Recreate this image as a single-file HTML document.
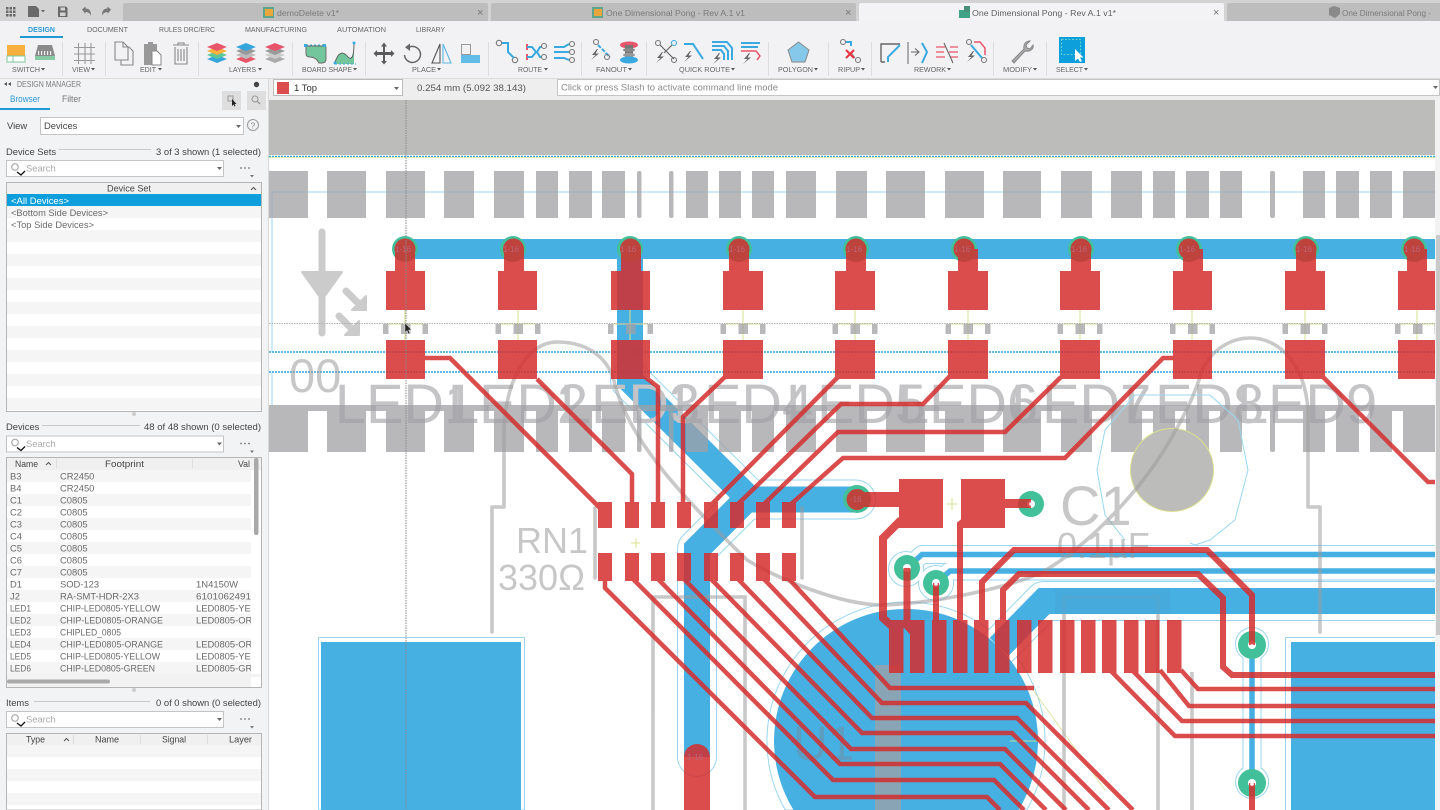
<!DOCTYPE html>
<html><head><meta charset="utf-8"><title>One Dimensional Pong</title>
<style>
html,body{margin:0;padding:0;width:1440px;height:810px;overflow:hidden;background:#fff}
svg{display:block;position:absolute;left:0;top:0;width:1440px;height:810px;overflow:hidden;filter:blur(.35px)}
text{font-family:"Liberation Sans",sans-serif}
.tb{font-size:7.6px;fill:#666}
.tab{font-size:8px;fill:#5f5f5f}
.t{font-size:9.4px;fill:#6a6a6a}
.h{font-size:9.4px;fill:#444}
.vt{font-size:8px;fill:#b9657a}
.si{fill:none;stroke:#777;stroke-width:1.1}
.bl{fill:none;stroke:#3aa9e0;stroke-width:2}
</style></head><body>
<svg width="1440" height="810" viewBox="0 0 1440 810" xmlns="http://www.w3.org/2000/svg">
<defs>
<path id="bolt" d="M6 0L1 6H4.500L0 11L8 4.500H4.500L7 0Z" fill="#666"/>
<g id="mid"><rect x="-22.500" y="324" width="5.500" height="10"/><rect x="-4.500" y="324" width="9.500" height="10"/><rect x="17" y="324" width="5.500" height="10"/></g>
<g id="row">
<rect x="269" width="39" height="47"/><rect x="327" width="39" height="47"/><rect x="386" width="39" height="47"/><rect x="444" width="30" height="47"/><rect x="494" width="30" height="47"/><rect x="536" width="22" height="47"/><rect x="569" width="23" height="47"/><rect x="602" width="23" height="47"/><rect x="637" width="4.500" height="47" rx="2"/><rect x="669" width="4.500" height="47" rx="2"/><rect x="686" width="22" height="47"/><rect x="719" width="22" height="47"/><rect x="752" width="22" height="47"/><rect x="786" width="30" height="47"/><rect x="836" width="31" height="47"/><rect x="886" width="39" height="47"/><rect x="945" width="39" height="47"/><rect x="1003" width="38" height="47"/><rect x="1061" width="31" height="47"/><rect x="1111" width="31" height="47"/><rect x="1153" width="22" height="47"/><rect x="1186" width="23" height="47"/><rect x="1220" width="22" height="47"/><rect x="1270" width="5" height="47" rx="2"/><rect x="1303" width="22" height="47"/><rect x="1336" width="23" height="47"/><rect x="1370" width="22" height="47"/><rect x="1403" width="32" height="47"/>
</g>
<g id="srch"><rect x="6.500" y=".5" width="217" height="16" fill="#fff" stroke="#c4c4c4"/><circle cx="15" cy="7" r="3.300" fill="none" stroke="#aaa" stroke-width="1.200"/><path d="M17 12L21 15L25 11" fill="none" stroke="#111" stroke-width="1.300"/><path d="M217 7h5l-2.500 3z" fill="#666"/><circle cx="241" cy="8" r=".9" fill="#777"/><circle cx="245" cy="8" r=".9" fill="#777"/><circle cx="249" cy="8" r=".9" fill="#777"/><path d="M250 15h4l-2 2.500z" fill="#777"/></g>
</defs>

<!-- title bar -->
<rect width="1440" height="22" fill="#d3d3d3"/>
<g fill="#6a6a6a"><rect x="6" y="7" width="2.500" height="2.500"/><rect x="9.500" y="7" width="2.500" height="2.500"/><rect x="13" y="7" width="2.500" height="2.500"/><rect x="6" y="10.500" width="2.500" height="2.500"/><rect x="9.500" y="10.500" width="2.500" height="2.500"/><rect x="13" y="10.500" width="2.500" height="2.500"/><rect x="6" y="14" width="2.500" height="2.500"/><rect x="9.500" y="14" width="2.500" height="2.500"/><rect x="13" y="14" width="2.500" height="2.500"/>
<path d="M28 6h8l3 3v8H28z"/><path d="M41 10h4l-2 2.500z"/>
<path d="M58 6.500h8l1.500 1.500v9h-9.500zM60.500 7.500v3h4.500v-3zM60 12.500v3.500h5.500v-3.500z" fill-rule="evenodd"/></g>
<path d="M82 9.500l3.500-3v2c4 0 5.500 2.500 5.500 7-1.500-2.500-3-3.500-5.500-3.500v2z" fill="#777"/>
<path d="M111 9.500l-3.500-3v2c-4 0-5.500 2.500-5.500 7 1.500-2.500 3-3.500 5.500-3.500v2z" fill="#777"/>
<path d="M123 21V5q0-2 2-2H486q2 0 2 2V21z" fill="#bdbdbd"/>
<path d="M491 21V5q0-2 2-2H854q2 0 2 2V21z" fill="#bdbdbd"/>
<path d="M859 22V5q0-2 2-2H1222q2 0 2 2V22z" fill="#f3f3f5"/>
<path d="M1227 21V5q0-2 2-2H1440V21z" fill="#bdbdbd"/>
<rect x="263" y="7" width="11" height="11" fill="#5fa58b"/><rect x="265" y="9" width="8" height="7" fill="#e8a63c"/>
<text x="277" y="16" class="tab" textLength="62" lengthAdjust="spacingAndGlyphs" style="fill:#7a7a7a">demoDelete v1*</text>
<text x="477" y="16" font-size="11" fill="#777">×</text>
<rect x="592" y="7" width="11" height="11" fill="#5fa58b"/><rect x="594" y="9" width="8" height="7" fill="#e8a63c"/>
<text x="606" y="16" class="tab" textLength="139" lengthAdjust="spacingAndGlyphs" style="fill:#7a7a7a">One Dimensional Pong - Rev A.1 v1</text>
<text x="845" y="16" font-size="11" fill="#777">×</text>
<rect x="959" y="10" width="11" height="8" fill="#3fa487"/><rect x="964" y="6" width="6" height="6" fill="#4a8f78"/>
<text x="972" y="16" class="tab" textLength="144" lengthAdjust="spacingAndGlyphs">One Dimensional Pong - Rev A.1 v1*</text>
<text x="1213" y="16" font-size="11" fill="#777">×</text>
<path d="M1329 8l5-2 6 2v6l-5 4-6-3z" fill="#8a8a8a"/>
<text x="1342" y="16" class="tab" textLength="89" lengthAdjust="spacingAndGlyphs" style="fill:#7a7a7a">One Dimensional Pong -</text>

<!-- toolbar -->
<rect y="21" width="1440" height="57" fill="#f2f2f4"/>
<text x="28" y="32" class="tb" textLength="27" lengthAdjust="spacingAndGlyphs" style="fill:#2a9ad6;font-weight:bold">DESIGN</text>
<text x="87" y="32" class="tb" textLength="41" lengthAdjust="spacingAndGlyphs">DOCUMENT</text>
<text x="159" y="32" class="tb" textLength="56" lengthAdjust="spacingAndGlyphs">RULES DRC/ERC</text>
<text x="245" y="32" class="tb" textLength="62" lengthAdjust="spacingAndGlyphs">MANUFACTURING</text>
<text x="337" y="32" class="tb" textLength="49" lengthAdjust="spacingAndGlyphs">AUTOMATION</text>
<text x="416" y="32" class="tb" textLength="29" lengthAdjust="spacingAndGlyphs">LIBRARY</text>
<rect x="20" y="36" width="43" height="2" fill="#1f9ad6"/>
<g fill="#ddd"><rect x="62" y="42" width="1" height="34"/><rect x="105" y="42" width="1" height="34"/><rect x="198" y="42" width="1" height="34"/><rect x="292" y="42" width="1" height="34"/><rect x="365" y="42" width="1" height="34"/><rect x="488" y="42" width="1" height="34"/><rect x="581" y="42" width="1" height="34"/><rect x="646" y="42" width="1" height="34"/><rect x="768" y="42" width="1" height="34"/><rect x="828" y="42" width="1" height="34"/><rect x="871" y="42" width="1" height="34"/><rect x="993" y="42" width="1" height="34"/><rect x="1046" y="42" width="1" height="34"/></g>
<g>
<text x="12" y="72" class="tb" textLength="28" lengthAdjust="spacingAndGlyphs">SWITCH</text><path d="M41 68h4l-2 2.500z" fill="#555"/>
<text x="72" y="72" class="tb" textLength="18" lengthAdjust="spacingAndGlyphs">VIEW</text><path d="M91 68h4l-2 2.500z" fill="#555"/>
<text x="140" y="72" class="tb" textLength="16" lengthAdjust="spacingAndGlyphs">EDIT</text><path d="M158 68h4l-2 2.500z" fill="#555"/>
<text x="229" y="72" class="tb" textLength="27" lengthAdjust="spacingAndGlyphs">LAYERS</text><path d="M258 68h4l-2 2.500z" fill="#555"/>
<text x="302" y="72" class="tb" textLength="50" lengthAdjust="spacingAndGlyphs">BOARD SHAPE</text><path d="M353 68h4l-2 2.500z" fill="#555"/>
<text x="412" y="72" class="tb" textLength="24" lengthAdjust="spacingAndGlyphs">PLACE</text><path d="M437 68h4l-2 2.500z" fill="#555"/>
<text x="518" y="72" class="tb" textLength="24" lengthAdjust="spacingAndGlyphs">ROUTE</text><path d="M544 68h4l-2 2.500z" fill="#555"/>
<text x="596" y="72" class="tb" textLength="31" lengthAdjust="spacingAndGlyphs">FANOUT</text><path d="M628 68h4l-2 2.500z" fill="#555"/>
<text x="679" y="72" class="tb" textLength="51" lengthAdjust="spacingAndGlyphs">QUICK ROUTE</text><path d="M731 68h4l-2 2.500z" fill="#555"/>
<text x="778" y="72" class="tb" textLength="35" lengthAdjust="spacingAndGlyphs">POLYGON</text><path d="M814 68h4l-2 2.500z" fill="#555"/>
<text x="838" y="72" class="tb" textLength="22" lengthAdjust="spacingAndGlyphs">RIPUP</text><path d="M861 68h4l-2 2.500z" fill="#555"/>
<text x="914" y="72" class="tb" textLength="32" lengthAdjust="spacingAndGlyphs">REWORK</text><path d="M947 68h4l-2 2.500z" fill="#555"/>
<text x="1003" y="72" class="tb" textLength="29" lengthAdjust="spacingAndGlyphs">MODIFY</text><path d="M1033 68h4l-2 2.500z" fill="#555"/>
<text x="1056" y="72" class="tb" textLength="27" lengthAdjust="spacingAndGlyphs">SELECT</text><path d="M1084 68h4l-2 2.500z" fill="#555"/>
</g>
<!-- icons -->
<path d="M7 45h18v12H7z" fill="#f6ae3c"/><rect x="13" y="56" width="12" height="6" fill="#fff" stroke="#7cc8a0" stroke-width="1"/><rect x="7" y="56" width="6" height="6" fill="#fff" stroke="#7cc8a0" stroke-width="1"/>
<path d="M38 45h14l3 11H35z" fill="#8a8a8a"/><g fill="#eee"><rect x="38" y="51" width="1.200" height="4"/><rect x="41" y="51" width="1.200" height="4"/><rect x="44" y="51" width="1.200" height="4"/><rect x="47" y="51" width="1.200" height="4"/><rect x="50" y="51" width="1.200" height="4"/></g><rect x="35" y="56" width="20" height="4" fill="#86cba4"/>
<g stroke="#999" stroke-width="1.100"><path d="M74 47.500H95M74 54H95M74 60.500H95M78.500 43V64M85 43V64M91 43V64"/></g>
<path class="si" d="M115 42h8l5 5v13h-13zM123 42v5h5M128 47h1l4 4v14h-12v-5" style="stroke:#888"/>
<path d="M144 44h4v-2h5v2h4v9h-4v12h-9z" fill="#999"/><path d="M152 51h5l4 4v10h-9z" fill="#fff" stroke="#888"/>
<path class="si" d="M175 47V64h12V47M173 45h16M178 45v-2h6v2M178 49v12M181 49v12M184 49v12" style="stroke:#888"/>
<g>
<polygon points="217,55 227,59 217,63 207,59" fill="#35a5dd"/><polygon points="217,51 227,55 217,59 207,55" fill="#5cc59a"/><polygon points="217,47 227,51 217,55 207,51" fill="#f8b13b"/><polygon points="217,43 227,47 217,51 207,47" fill="#e8556a"/>
<polygon points="246,55 256,59 246,63 236,59" fill="#e8556a"/><polygon points="246,51 256,55 246,59 236,55" fill="#bbb"/><polygon points="246,47 256,51 246,55 236,51" fill="#999"/><polygon points="246,43 256,47 246,51 236,47" fill="#35a5dd"/>
<polygon points="275,55 285,59 275,63 265,59" fill="#aaa"/><polygon points="275,51 285,55 275,59 265,55" fill="#ccc"/><polygon points="275,47 285,51 275,55 265,51" fill="#999"/><polygon points="275,43 285,47 275,51 265,47" fill="#e8556a"/>
</g>
<path d="M306 46h19q1 0 1 2v11q0 4-4 4h-3q-3-6-9-6-4 0-4-3z" fill="#73c69b" stroke="#666" stroke-width=".9"/><path d="M306 45h19" stroke="#3aa9e0" stroke-dasharray="2 2"/><rect x="304" y="44" width="3" height="3" fill="#3aa9e0"/><rect x="323" y="44" width="3" height="3" fill="#3aa9e0"/>
<path d="M335 64V62Q340 48 347 56T354 43V64z" fill="#73c69b"/><path d="M335 62Q340 48 347 56T354 43" fill="none" stroke="#555" stroke-width=".9"/><path d="M335 64H356" stroke="#3aa9e0" stroke-dasharray="2 2"/><circle cx="354" cy="43" r="1.500" fill="#3aa9e0"/><circle cx="335" cy="63" r="1.500" fill="#3aa9e0"/>
<path d="M384 42.500l3 4h-2v5.500H391V50l3.500 3.500-3.500 3.500v-2h-6v6h2l-3 3.500-3-3.500h2v-6h-6v2l-3.500-3.500 3.500-3.500v2h6v-5.500h-2z" fill="#5a5a5a"/>
<path d="M409.500 47a8 8 0 1 1-5 8" fill="none" stroke="#666" stroke-width="1.500"/><path d="M410 43.500v7.500l-5-3.700z" fill="#666"/>
<path d="M440 44L432 63H440z" fill="none" stroke="#555" stroke-width="1.100"/><path d="M443 44L451 63H443z" fill="none" stroke="#5db7e4" stroke-width="1.100"/>
<rect x="461.500" y="44.500" width="9" height="10" fill="none" stroke="#999"/><rect x="461" y="55" width="19" height="8" fill="#62bce8"/>
<g class="si"><circle cx="499" cy="43" r="2.700"/><circle cx="515" cy="60" r="2.700"/></g><path class="bl" d="M502 43h6v9l6 6"/>
<path d="M527 44v6M527 54v6" stroke="#e8556a" stroke-width="2"/><path class="bl" d="M527 47h5l4 5-4 5h-5M537 52l3-5h2M537 52l3 5h2"/><g class="si"><circle cx="544" cy="46" r="2.500"/><circle cx="544" cy="57" r="2.500"/></g>
<path class="bl" d="M554 47h10l5-3M554 52H569M554 58h10l5 2"/><g class="si"><circle cx="572" cy="44" r="2.500"/><circle cx="572" cy="52" r="2.500"/><circle cx="572" cy="60" r="2.500"/></g>
<circle class="si" cx="596" cy="42" r="2.500"/><path class="bl" d="M598 45l12 12" stroke-dasharray="4 1.500"/><circle class="si" cx="607" cy="57" r="2.500"/><use href="#bolt" x="591" y="49"/>
<ellipse cx="629" cy="45" rx="9" ry="3.500" fill="#e8556a"/><rect x="625" y="45" width="8" height="14" fill="#777"/><ellipse cx="629" cy="50" rx="6" ry="2" fill="#888"/><ellipse cx="629" cy="55" rx="6" ry="2" fill="#999"/><ellipse cx="629" cy="60" rx="9" ry="3.500" fill="#3aa9e0"/>
<g class="si"><circle cx="658" cy="43" r="2.500"/><circle cx="674" cy="60" r="2.500"/></g><circle class="si" cx="674" cy="43" r="2.500" style="stroke:#3aa9e0"/><path d="M660 45l14 14M672 45l-8 8" fill="none" stroke="#666" stroke-width="1.200"/><use href="#bolt" x="656" y="52"/>
<path class="bl" d="M684 44h9l10 15"/><use href="#bolt" x="684" y="51"/>
<path class="bl" d="M712 42h15l5 6v12M712 46h12l4 5v9M712 50h9l3 4v6"/><use href="#bolt" x="713" y="53"/>
<path class="bl" d="M741 43h19M741 47h17"/><path d="M741 51h15l4 5-3 4" fill="none" stroke="#e8556a" stroke-width="1.500"/><use href="#bolt" x="743" y="53"/>
<polygon points="798.500,42 809,50 805,62 792,62 788,50" fill="#85c8ea" stroke="#888" stroke-width="1"/>
<circle class="si" cx="843" cy="42" r="2.500"/><circle class="si" cx="858" cy="60" r="2.500"/><path class="bl" d="M846 42h5v4"/><path d="M851 52l4 6" stroke="#888"/><path d="M846 50l8 8M854 50l-8 8" stroke="#e8323c" stroke-width="2"/>
<path d="M881 62V44H900M881 62h4" fill="none" stroke="#666" stroke-width="1.400"/><path class="bl" d="M888 62V57L900 45"/>
<path d="M908 42V64" stroke="#666"/><path d="M911 52h7M915 48.500l4 3.500-4 3.500" fill="none" stroke="#666" stroke-width="1.100"/><path class="bl" d="M922 43l5 9-5 11"/>
<path d="M936 47h9M936 52h8M936 57h9M950 47h8M949 52h9M950 57h8" stroke="#e8556a" stroke-width="1.200"/><path d="M944 43l9 20" stroke="#666" stroke-width="1.100"/>
<circle class="si" cx="969" cy="42" r="2.500"/><circle class="si" cx="984" cy="60" r="2.500"/><path class="bl" d="M971 45l11 13"/><path d="M974 42h6l5 6v7" fill="none" stroke="#e8556a" stroke-width="1.500"/><use href="#bolt" x="967" y="51"/>
<path d="M1012 61l12-12c-1-5 2-8 6-8l-4 4 1 3 3 1 3-4c1 4-3 7-8 6l-11 12z" fill="#aaa" stroke="#888"/>
<rect x="1059" y="37" width="26" height="26" fill="#0d9fdb"/><rect x="1061.500" y="39.500" width="19" height="15" fill="none" stroke="#7fe0d0" stroke-width=".8" stroke-dasharray="2 1.500"/><path d="M1075 49v12l3-2.500 2 3.500 2-1-2-3.500h3.500z" fill="#fff"/>

<!-- command row -->
<rect x="269" y="78" width="1171" height="22" fill="#eeeeee"/>
<rect x="269" y="78" width="1171" height="1" fill="#dcdcd8"/>
<rect x="273.500" y="79.500" width="129" height="16" fill="#fff" stroke="#bbb"/>
<rect x="277" y="82" width="12" height="12" fill="#db4c4c"/>
<text x="294" y="91" font-size="9.500" fill="#333">1 Top</text>
<path d="M394 87h5l-2.500 3z" fill="#666"/>
<text x="417" y="91" font-size="9.500" fill="#555" textLength="109" lengthAdjust="spacingAndGlyphs">0.254 mm (5.092 38.143)</text>
<rect x="557.500" y="79.500" width="882" height="16" fill="#fff" stroke="#c4c4c4"/>
<text x="561" y="90.500" font-size="9.500" fill="#8a8a8a" textLength="217" lengthAdjust="spacingAndGlyphs">Click or press Slash to activate command line mode</text>
<path d="M1433 86h5l-2.500 3z" fill="#666"/>

<!-- PCB canvas -->
<rect x="269" y="100" width="1171" height="710" fill="#fff"/>
<rect x="269" y="100" width="1166" height="55" fill="#bcbcba"/>

<!-- copper bottom (blue) -->
<g fill="none" stroke="#9ad6f1" stroke-linejoin="round" stroke-linecap="round">
<path d="M318.500 810V637.500H524.500V810Z" fill="#fff" stroke-width="1"/>
<path d="M1285.500 810V637.500H1439" fill="#fff" stroke-width="1"/>
<path d="M785.300 810A139 139 0 1 1 1026.700 810Z" fill="#fff" stroke-width="1"/>
<path d="M272 192V352M272 372V405M272 192H1435" stroke-width="1"/>
<path d="M630 380L750 499.500H856" stroke-width="40"/><path d="M697 757V549L748 498" stroke-width="40"/>
<path d="M1435 601H1044L999 647" stroke-width="40"/>
<path d="M1435 554.500H922L906 569" stroke-width="19"/><path d="M1435 571H950L936 583" stroke-width="19"/>
<path d="M1252 644V782" stroke-width="19"/><path d="M1252 644h.1M1252 782h.1" stroke-width="34"/>
<path d="M906 569h.1M936 583h.1" stroke-width="36"/>
</g>
<g fill="none" stroke="#fff" stroke-linejoin="round" stroke-linecap="round">
<path d="M630 380L750 499.500H856" stroke-width="38"/><path d="M697 757V549L748 498" stroke-width="38"/>
<path d="M1435 601H1044L999 647" stroke-width="38"/>
<path d="M1435 554.500H922L906 569" stroke-width="17"/><path d="M1435 571H950L936 583" stroke-width="17"/>
<path d="M1252 644V782" stroke-width="17"/><path d="M1252 644h.1M1252 782h.1" stroke-width="32"/>
<path d="M906 569h.1M936 583h.1" stroke-width="34"/>
</g>
<g fill="#46b0e3">
<rect x="321" y="642" width="200" height="168"/>
<rect x="1291" y="642" width="144" height="168"/>
<path d="M793.500 810A132 132 0 1 1 1018.500 810Z"/>
<rect x="405" y="239" width="1030" height="20"/>
</g>
<g fill="none" stroke="#46b0e3" stroke-linejoin="miter">
<path d="M630 249V380L750 499.500H856" stroke-width="26"/>
<path d="M697 757V549L748 498" stroke-width="26"/>
<path d="M1435 601H1044L999 647" stroke-width="26"/>
<path d="M1435 554.500H922L906 569" stroke-width="5.500"/>
<path d="M1435 571H950L936 583" stroke-width="5.500"/>
<path d="M1252 644V782" stroke-width="5.500"/>
</g>
<g fill="#42c09a">
<circle cx="405" cy="249" r="13"/><circle cx="513" cy="249" r="13"/><circle cx="630" cy="249" r="13"/><circle cx="739" cy="249" r="13"/><circle cx="856" cy="249" r="13"/><circle cx="964" cy="249" r="13"/><circle cx="1081" cy="249" r="13"/><circle cx="1189" cy="249" r="13"/><circle cx="1306" cy="249" r="13"/><circle cx="1414" cy="249" r="13"/>
<circle cx="857" cy="499" r="14"/><circle cx="1031" cy="504" r="13"/><circle cx="907" cy="568" r="13"/><circle cx="936" cy="583" r="13"/><circle cx="1252" cy="645" r="14"/><circle cx="1252" cy="783" r="14"/>
</g>
<g fill="#fff"><circle cx="1031" cy="504" r="4"/><circle cx="936" cy="583" r="4"/><circle cx="1252" cy="645" r="4"/><circle cx="1252" cy="783" r="4"/><circle cx="907" cy="568" r="4"/></g>

<!-- dashed dimension lines -->
<g stroke="#2fa4e0" stroke-width="1.500" stroke-dasharray="2 1"><path d="M269 156.500H1435M269 352H1435M269 372H1435"/></g>
<path d="M269 157.500H1435" stroke="#dfe48f" stroke-width=".7"/>

<!-- yellow marks -->
<g stroke="#d9e08c" stroke-width="1" fill="none">
<path d="M405 310V340M388 324H423M518 310V340M500 324H535M630 310V340M613 324H648M743 310V340M725 324H760M855 310V340M838 324H872M968 310V340M950 324H985M1080 310V340M1063 324H1098M1192 310V340M1175 324H1210M1305 310V340M1288 324H1322M1417 310V340M1400 324H1435"/>
<path d="M952 498V510M947 504H957M631 543H640M636 538V548"/>
<path d="M1033 690L1105 790" stroke-width=".7"/><path d="M1010 741H1040" stroke="#b7dd9f"/>
</g>

<!-- LED reference text (below pads) -->
<g fill="#c4c4c6" font-size="56">
<text x="335" y="423">LED1</text>
<text x="448" y="423">LED2</text>
<text x="560" y="423">LED3</text>
<text x="673" y="423">LED4</text>
<text x="786" y="423">LED5</text>
<text x="898" y="423">LED6</text>
<text x="1011" y="423">LED7</text>
<text x="1124" y="423">LED8</text>
<text x="1237" y="423">LED9</text>
</g>

<!-- gray pad layer -->
<g fill="#a0a0a4" opacity=".75">
<use href="#row" y="171"/>
<use href="#row" y="405"/>
<rect x="269" y="405" width="1166" height="6"/>
<use href="#mid" x="405.500"/><use href="#mid" x="518"/><use href="#mid" x="630.500"/><use href="#mid" x="743"/><use href="#mid" x="855"/><use href="#mid" x="968"/><use href="#mid" x="1080"/><use href="#mid" x="1192.500"/><use href="#mid" x="1305"/><use href="#mid" x="1417.500"/>
<rect x="875" y="665" width="26" height="145"/>
</g>
<circle cx="1172" cy="470" r="41.500" fill="#bcbcbb" stroke="#dbe08d" stroke-width="1"/>
<path d="M1135 395L1210 395L1238 420L1248 470L1235 520L1210 540L1195 545L1190 543M1135 395L1105 430L1097 470L1105 515L1125 540" fill="none" stroke="#9ad6f1" stroke-width="1"/>

<!-- silk layer -->
<g opacity=".55">
<g fill="none" stroke="#9c9c9c" stroke-width="3.600" stroke-linejoin="round" stroke-linecap="round">
<path d="M492 632V507H504V430C505 385 525 342 557 342C590 342 610 360 615 385C630 440 680 495 747 560C780 580 840 604 880 605C930 604 1000 590 1041 573C1090 545 1140 490 1166 447C1185 415 1195 395 1202 370C1215 345 1235 338 1250 338C1280 338 1305 365 1308 410V507H1320V632"/>
<path d="M595 508V578M802 508V578"/>
</g>
<g fill="none" stroke="#9c9c9c" stroke-width="3.600" stroke-linejoin="miter">
<path d="M653 810V597H745V810M1064 810V597H1158V810M1192 810V672"/>
</g>
<g fill="none" stroke="#a0a0a0" stroke-linecap="round" stroke-linejoin="round">
<path d="M322 232V333" stroke-width="7"/>
<path d="M302 272H342L322 300Z" fill="#a0a0a0" stroke-width="2"/>
<path d="M346 291L360 305M339 316L353 330" stroke-width="7"/>
<path d="M366 296V310H352zM359 321V335H345z" fill="#a0a0a0" stroke-width="2"/>
</g>
<g fill="#999">
<text x="289" y="392" font-size="47">00</text>
<text x="516" y="553" font-size="36">RN1</text>
<text x="498" y="590" font-size="36">330Ω</text>
<text x="1060" y="525" font-size="56">C1</text>
<text x="1057" y="558" font-size="36">0.1µF</text>
</g>
<text x="793" y="760" font-size="48" fill="#6f8fa5">U1</text>
</g>
<!-- silk rect tinted where it crosses the wide blue band -->
<rect x="1055" y="588" width="115" height="26" fill="#46a9da" opacity=".8"/>

<!-- copper top (red) -->
<g opacity=".85">
<g fill="#d52d2d">
<rect x="386" y="271" width="39" height="39"/><rect x="498" y="271" width="39" height="39"/><rect x="611" y="271" width="39" height="39"/><rect x="723" y="271" width="40" height="39"/><rect x="835" y="271" width="40" height="39"/><rect x="948" y="271" width="40" height="39"/><rect x="1060" y="271" width="40" height="39"/><rect x="1173" y="271" width="39" height="39"/><rect x="1285" y="271" width="40" height="39"/><rect x="1398" y="271" width="37" height="39"/>
<rect x="386" y="340" width="39" height="39"/><rect x="498" y="340" width="39" height="39"/><rect x="611" y="340" width="39" height="39"/><rect x="723" y="340" width="40" height="39"/><rect x="835" y="340" width="40" height="39"/><rect x="948" y="340" width="40" height="39"/><rect x="1060" y="340" width="40" height="39"/><rect x="1173" y="340" width="39" height="39"/><rect x="1285" y="340" width="40" height="39"/><rect x="1398" y="340" width="37" height="39"/>
<rect x="395" y="249" width="20" height="24"/><rect x="504" y="249" width="20" height="24"/><rect x="621" y="249" width="20" height="24"/><rect x="729" y="249" width="20" height="24"/><rect x="846" y="249" width="20" height="24"/><rect x="958" y="249" width="20" height="24"/><rect x="1071" y="249" width="20" height="24"/><rect x="1183" y="249" width="20" height="24"/><rect x="1296" y="249" width="20" height="24"/><rect x="1407" y="249" width="20" height="24"/>
<circle cx="405" cy="249" r="10.500"/><circle cx="513.500" cy="249" r="10.500"/><circle cx="630.500" cy="249" r="10.500"/><circle cx="739" cy="249" r="10.500"/><circle cx="856" cy="249" r="10.500"/><circle cx="964" cy="249" r="10.500"/><circle cx="1081" cy="249" r="10.500"/><circle cx="1189" cy="249" r="10.500"/><circle cx="1306" cy="249" r="10.500"/><circle cx="1414" cy="249" r="10.500"/>
<!-- RN1 pads -->
<rect x="598" y="502" width="14" height="26"/><rect x="625" y="502" width="14" height="26"/><rect x="651" y="502" width="14" height="26"/><rect x="677" y="502" width="14" height="26"/><rect x="704" y="502" width="14" height="26"/><rect x="730" y="502" width="14" height="26"/><rect x="756" y="502" width="14" height="26"/><rect x="782" y="502" width="14" height="26"/>
<rect x="598" y="553" width="14" height="28"/><rect x="625" y="553" width="14" height="28"/><rect x="651" y="553" width="14" height="28"/><rect x="677" y="553" width="14" height="28"/><rect x="704" y="553" width="14" height="28"/><rect x="730" y="553" width="14" height="28"/><rect x="756" y="553" width="14" height="28"/><rect x="782" y="553" width="14" height="28"/>
<!-- C1 pads -->
<rect x="899" y="479" width="44" height="49"/><rect x="961" y="479" width="44" height="49"/>
<rect x="857" y="492" width="44" height="15"/><circle cx="857" cy="499.500" r="10.500"/>
<rect x="1003" y="499" width="28" height="9"/>
<!-- U1 pads -->
<rect x="889" y="620" width="14.500" height="53"/><rect x="910" y="620" width="14.500" height="53"/><rect x="932" y="620" width="14.500" height="53"/><rect x="953" y="620" width="14.500" height="53"/><rect x="974" y="620" width="14.500" height="53"/><rect x="995" y="620" width="14.500" height="53"/><rect x="1017" y="620" width="14.500" height="53"/><rect x="1038" y="620" width="14.500" height="53"/><rect x="1060" y="620" width="14.500" height="53"/><rect x="1081" y="620" width="14.500" height="53"/><rect x="1102" y="620" width="14.500" height="53"/><rect x="1124" y="620" width="14.500" height="53"/><rect x="1145" y="620" width="14.500" height="53"/><rect x="1167" y="620" width="14.500" height="53"/>
<circle cx="697" cy="757" r="13"/><rect x="684" y="757" width="26" height="53"/>
</g>
<g fill="none" stroke="#d52d2d" stroke-width="4.500">
<path d="M425 358H450L600 508"/>
<path d="M537 379L632 474V505"/>
<path d="M645 377L658 387V505"/>
<path d="M727 375L683 417V505"/>
<path d="M838 377L711 505"/>
<path d="M950 376L923 404H841L737 505"/>
<path d="M1061 377L1005 432H838L763 505"/>
<path d="M1175 358H1163L1065 458H843L790 505"/>
<path d="M1323 377L1428 482H1435"/>
<path d="M605 578V588L815 797H987L1000 810"/>
<path d="M632 578L833 780H994L1024 810"/>
<path d="M657 578L840 764H1000L1046 810"/>
<path d="M683 578L851 749H1005L1066 810"/>
<path d="M710 578L862 733H1012L1089 810"/>
<path d="M737 578L872 718H1017L1109 810"/>
<path d="M763 578L882 703H1026L1133 810"/>
<path d="M788 578L890 688H1034"/>
<path d="M1181 670L1198 689H1435"/>
<path d="M1160 670L1189 706H1435"/>
<path d="M1132 670L1182 721H1435"/>
<path d="M1110 670L1175 736H1435"/>
</g>
<g fill="none" stroke="#d52d2d">
<path d="M901 520L883 538V618L896 630" stroke-width="8"/>
<path d="M907 568V626L920 640" stroke-width="7"/>
<path d="M936 583V622" stroke-width="6"/>
<path d="M965 520L960 524V622" stroke-width="6"/>
<path d="M982 622V582L1014 550H1207L1252 595V645" stroke-width="6"/>
<path d="M1003 622V590L1019 574H1198L1223 598V667L1232 675H1435" stroke-width="6"/>
<path d="M1252 783V810" stroke-width="6"/>
</g>
</g>
<g fill="#fff"><circle cx="1031" cy="504" r="1.800"/><circle cx="936" cy="584" r="1.800"/><circle cx="1252" cy="646" r="1.800"/><circle cx="1252" cy="784" r="1.800"/></g>

<g>
<text x="395" y="252" class="vt">1-16</text><text x="503" y="252" class="vt">1-16</text><text x="620" y="252" class="vt">1-16</text><text x="729" y="252" class="vt">1-16</text><text x="846" y="252" class="vt">1-16</text><text x="954" y="252" class="vt">1-16</text><text x="1071" y="252" class="vt">1-16</text><text x="1179" y="252" class="vt">1-16</text><text x="1296" y="252" class="vt">1-16</text><text x="1404" y="252" class="vt">1-16</text>
<text x="850" y="502" class="vt">-16</text><text x="687" y="760" class="vt">1-16</text>
</g>

<!-- crosshair -->
<path d="M406 100V810" stroke="#8a8a8a" stroke-width="1" stroke-dasharray="1.500 1"/>
<path d="M269 323.500H1435" stroke="#b0b0b0" stroke-width="1" stroke-dasharray="1.500 1"/>
<path d="M405 323v9.500l2-2 1.500 3.500 1.500-.7-1.500-3.300h3z" fill="#222" stroke="#fff" stroke-width=".4"/>

<!-- right strip -->
<rect x="1435" y="100" width="5" height="710" fill="#f2f2f2"/>
<rect x="1436" y="235" width="4" height="400" fill="#c9c9c9"/>

<!-- left panel -->
<rect y="78" width="269" height="732" fill="#f2f3f5"/>
<rect y="78" width="269" height="1" fill="#dcdcd8"/>
<rect x="268" y="78" width="1" height="732" fill="#d8d8d8"/>
<path d="M7 82v4l-3-2zM11 82v4l-3-2z" fill="#555"/>
<text x="17" y="87" font-size="8" fill="#7c7c7c" textLength="64" lengthAdjust="spacingAndGlyphs">DESIGN MANAGER</text>
<circle cx="256.500" cy="84.500" r="2.700" fill="#444"/>
<text x="10" y="102" font-size="9.500" fill="#2a9ad6" textLength="30" lengthAdjust="spacingAndGlyphs">Browser</text>
<text x="62" y="102" font-size="9.500" fill="#777" textLength="19" lengthAdjust="spacingAndGlyphs">Filter</text>
<rect y="108" width="50" height="2" fill="#1f9ad6"/>
<rect x="222" y="91" width="19" height="19" fill="#dedede"/><rect x="247" y="91" width="19" height="19" fill="#dedede"/>
<rect x="228" y="96" width="5" height="5" fill="none" stroke="#999"/><path d="M232 99v7l1.500-1.500 1 2 1-.5-1-2h2z" fill="#222"/>
<circle cx="255" cy="99" r="3" fill="none" stroke="#999"/><path d="M257 101l3 3" stroke="#999" stroke-width="1.300"/>

<text x="7" y="129" class="t" style="fill:#444">View</text>
<rect x="40.500" y="117.500" width="203" height="17" fill="#fff" stroke="#c4c4c4"/>
<text x="44" y="129" class="h">Devices</text>
<path d="M236 125h5l-2.500 3z" fill="#666"/>
<circle cx="253" cy="125" r="5.500" fill="none" stroke="#999"/><text x="250.500" y="128.500" font-size="8.500" fill="#888">?</text>

<text x="6" y="155" class="h">Device Sets</text><rect x="59" y="149" width="92" height="1" fill="#c9c9c9"/>
<text x="156" y="155" class="h" textLength="105" lengthAdjust="spacingAndGlyphs">3 of 3 shown (1 selected)</text>
<use href="#srch" y="160"/>
<text x="26" y="171.500" class="t" style="fill:#aaa">Search</text>

<rect x="6.500" y="182.500" width="255" height="229" fill="#fff" stroke="#b5b5b5"/>
<rect x="7" y="183" width="254" height="11" fill="#f0f0f0"/>
<text x="107" y="191.500" class="h" textLength="44" lengthAdjust="spacingAndGlyphs">Device Set</text>
<path d="M251 190l2.500-2.500 2.500 2.500" fill="none" stroke="#555"/>
<rect x="7" y="194" width="254" height="12" fill="#0d9fdb"/>
<text x="11" y="204" font-size="9.400" fill="#fff" textLength="58" lengthAdjust="spacingAndGlyphs">&lt;All Devices&gt;</text>
<g fill="#f5f5f5"><rect x="7" y="206" width="254" height="12"/><rect x="7" y="230" width="254" height="12"/><rect x="7" y="254" width="254" height="12"/><rect x="7" y="278" width="254" height="12"/><rect x="7" y="302" width="254" height="12"/><rect x="7" y="326" width="254" height="12"/><rect x="7" y="350" width="254" height="12"/><rect x="7" y="374" width="254" height="12"/><rect x="7" y="398" width="254" height="12"/></g>
<text x="11" y="216" class="t" textLength="97" lengthAdjust="spacingAndGlyphs">&lt;Bottom Side Devices&gt;</text>
<text x="11" y="228" class="t" textLength="83" lengthAdjust="spacingAndGlyphs">&lt;Top Side Devices&gt;</text>
<circle cx="134" cy="414" r="2" fill="#ccc"/>

<text x="6" y="430" class="h">Devices</text><rect x="42" y="425" width="98" height="1" fill="#c9c9c9"/>
<text x="144" y="430" class="h" textLength="117" lengthAdjust="spacingAndGlyphs">48 of 48 shown (0 selected)</text>
<use href="#srch" y="435.500"/>
<text x="26" y="447" class="t" style="fill:#aaa">Search</text>

<rect x="6.500" y="457.500" width="255" height="230" fill="#fff" stroke="#b5b5b5"/>
<rect x="7" y="458" width="254" height="12" fill="#f0f0f0"/>
<text x="15" y="467" class="h" textLength="23" lengthAdjust="spacingAndGlyphs">Name</text><path d="M46 465l2.500-2.500 2.500 2.500" fill="none" stroke="#555"/>
<text x="105" y="467" class="h" textLength="39" lengthAdjust="spacingAndGlyphs">Footprint</text>
<text x="238" y="467" class="h" textLength="12" lengthAdjust="spacingAndGlyphs">Val</text>
<rect x="56" y="459" width="1" height="9" fill="#ddd"/><rect x="192" y="459" width="1" height="9" fill="#ddd"/>
<g fill="#f5f5f5"><rect x="7" y="470" width="244" height="12"/><rect x="7" y="494" width="244" height="12"/><rect x="7" y="518" width="244" height="12"/><rect x="7" y="542" width="244" height="12"/><rect x="7" y="566" width="244" height="12"/><rect x="7" y="590" width="244" height="12"/><rect x="7" y="614" width="244" height="12"/><rect x="7" y="638" width="244" height="12"/><rect x="7" y="662" width="244" height="12"/></g>
<text x="10" y="479.500" class="t">B3</text><text x="60" y="479.500" class="t">CR2450</text>
<text x="10" y="491.500" class="t">B4</text><text x="60" y="491.500" class="t">CR2450</text>
<text x="10" y="503.500" class="t">C1</text><text x="60" y="503.500" class="t">C0805</text>
<text x="10" y="515.500" class="t">C2</text><text x="60" y="515.500" class="t">C0805</text>
<text x="10" y="527.500" class="t">C3</text><text x="60" y="527.500" class="t">C0805</text>
<text x="10" y="539.500" class="t">C4</text><text x="60" y="539.500" class="t">C0805</text>
<text x="10" y="551.500" class="t">C5</text><text x="60" y="551.500" class="t">C0805</text>
<text x="10" y="563.500" class="t">C6</text><text x="60" y="563.500" class="t">C0805</text>
<text x="10" y="575.500" class="t">C7</text><text x="60" y="575.500" class="t">C0805</text>
<text x="10" y="587.500" class="t">D1</text><text x="60" y="587.500" class="t">SOD-123</text><text x="196" y="587.500" class="t" textLength="42" lengthAdjust="spacingAndGlyphs">1N4150W</text>
<text x="10" y="599.500" class="t">J2</text><text x="60" y="599.500" class="t" textLength="79" lengthAdjust="spacingAndGlyphs">RA-SMT-HDR-2X3</text><text x="196" y="599.500" class="t" textLength="55" lengthAdjust="spacingAndGlyphs">6101062491</text>
<text x="10" y="611.500" class="t" textLength="21" lengthAdjust="spacingAndGlyphs">LED1</text><text x="60" y="611.500" class="t" textLength="100" lengthAdjust="spacingAndGlyphs">CHIP-LED0805-YELLOW</text>
<text x="10" y="623.500" class="t" textLength="21" lengthAdjust="spacingAndGlyphs">LED2</text><text x="60" y="623.500" class="t" textLength="103" lengthAdjust="spacingAndGlyphs">CHIP-LED0805-ORANGE</text>
<text x="10" y="635.500" class="t" textLength="21" lengthAdjust="spacingAndGlyphs">LED3</text><text x="60" y="635.500" class="t" textLength="61" lengthAdjust="spacingAndGlyphs">CHIPLED_0805</text>
<text x="10" y="647.500" class="t" textLength="21" lengthAdjust="spacingAndGlyphs">LED4</text><text x="60" y="647.500" class="t" textLength="103" lengthAdjust="spacingAndGlyphs">CHIP-LED0805-ORANGE</text>
<text x="10" y="659.500" class="t" textLength="21" lengthAdjust="spacingAndGlyphs">LED5</text><text x="60" y="659.500" class="t" textLength="100" lengthAdjust="spacingAndGlyphs">CHIP-LED0805-YELLOW</text>
<text x="10" y="671.500" class="t" textLength="21" lengthAdjust="spacingAndGlyphs">LED6</text><text x="60" y="671.500" class="t" textLength="95" lengthAdjust="spacingAndGlyphs">CHIP-LED0805-GREEN</text>
<text x="196" y="611.500" class="t">LED0805-YEL</text><text x="196" y="623.500" class="t">LED0805-OR</text><text x="196" y="647.500" class="t">LED0805-OR</text><text x="196" y="659.500" class="t">LED0805-YEL</text><text x="196" y="671.500" class="t">LED0805-GR</text>
<rect x="251" y="470" width="10" height="217" fill="#fff"/>
<rect x="254" y="458" width="4.500" height="77" rx="2" fill="#a9a9a9"/>
<rect x="7" y="674" width="254" height="13" fill="#f2f2f2"/>
<rect x="251" y="677" width="10" height="10" fill="#fff"/>
<rect x="7" y="679.500" width="103" height="4" rx="2" fill="#a9a9a9"/>
<circle cx="134" cy="690" r="2" fill="#ccc"/>

<text x="6" y="706" class="h">Items</text><rect x="34" y="701" width="116" height="1" fill="#c9c9c9"/>
<text x="156" y="706" class="h" textLength="105" lengthAdjust="spacingAndGlyphs">0 of 0 shown (0 selected)</text>
<use href="#srch" y="711"/>
<text x="26" y="722.500" class="t" style="fill:#aaa">Search</text>

<path d="M6.500 810V733.500H261.500V810Z" fill="#fff" stroke="#b5b5b5"/>
<rect x="7" y="734" width="254" height="11" fill="#f0f0f0"/>
<text x="26" y="742.500" class="h" textLength="19" lengthAdjust="spacingAndGlyphs">Type</text><path d="M64 741l2.500-2.500 2.500 2.500" fill="none" stroke="#555"/>
<text x="95" y="742.500" class="h" textLength="24" lengthAdjust="spacingAndGlyphs">Name</text>
<text x="162" y="742.500" class="h" textLength="24" lengthAdjust="spacingAndGlyphs">Signal</text>
<text x="229" y="742.500" class="h" textLength="23" lengthAdjust="spacingAndGlyphs">Layer</text>
<rect x="73" y="735" width="1" height="9" fill="#ddd"/><rect x="140" y="735" width="1" height="9" fill="#ddd"/><rect x="207" y="735" width="1" height="9" fill="#ddd"/>
<g fill="#f5f5f5"><rect x="7" y="745" width="254" height="12"/><rect x="7" y="769" width="254" height="12"/><rect x="7" y="793" width="254" height="12"/></g>
</svg>
</body></html>
